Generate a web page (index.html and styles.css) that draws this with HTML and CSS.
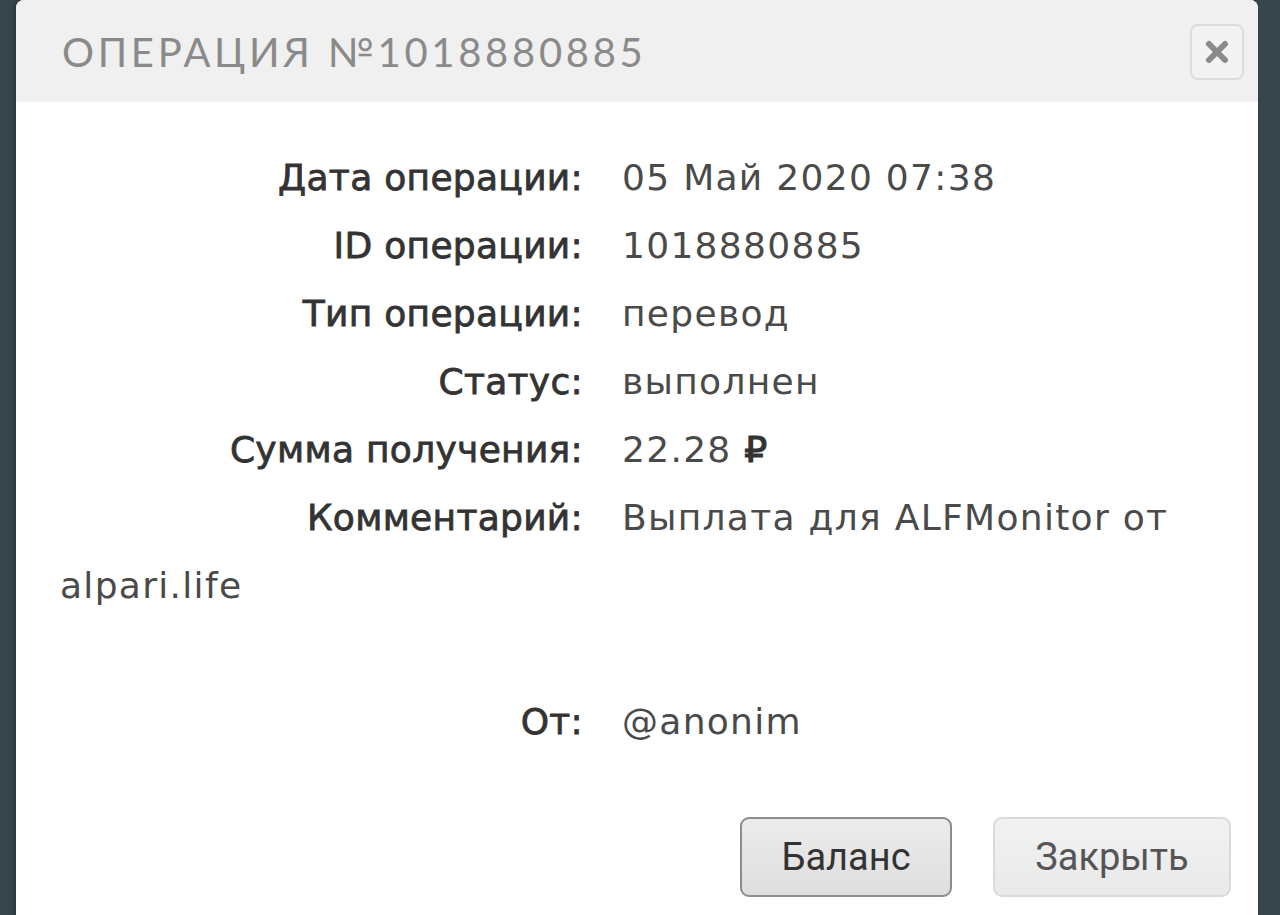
FILE: index.html
```html
<!DOCTYPE html>
<html lang="ru">
<head>
  <meta charset="UTF-8">
  <title>Операция №1018880885</title>
  <meta name="viewport" content="width=device-width, initial-scale=1.0">
  <link rel="stylesheet" href="styles.css">
</head>
<body>
  <div class="modal">
    <div class="modal-header">
      <h3 class="modal-title">Операция №1018880885</h3>
      <button class="close-btn" type="button">
        <svg width="26" height="26" viewBox="0 0 26 26"><path d="M5 5 L21 21 M21 5 L5 21" stroke="#8a8a8a" stroke-width="6" stroke-linecap="round"/></svg>
      </button>
    </div>
    <div class="modal-body">
      <div class="row"><span class="label">Дата операции:</span>05 Май 2020 07:38</div>
      <div class="row"><span class="label">ID операции:</span>1018880885</div>
      <div class="row"><span class="label">Тип операции:</span>перевод</div>
      <div class="row"><span class="label">Статус:</span>выполнен</div>
      <div class="row"><span class="label">Сумма получения:</span>22.28 <b class="rub">&#8381;</b></div>
      <div class="row"><span class="label">Комментарий:</span>Выплата для ALFMonitor от alpari.life</div>
      <div class="row empty"></div>
      <div class="row"><span class="label">От:</span>@anonim</div>
    </div>
    <div class="modal-footer">
      <button class="btn btn-active" type="button">Баланс</button>
      <button class="btn btn-close" type="button">Закрыть</button>
    </div>
  </div>
</body>
</html>
```

FILE: styles.css
```css
body { margin: 0; background: #37454d; height: 915px; overflow: hidden; font-family: "DejaVu Sans", Arial, sans-serif; }
.modal { margin-left: 16px; width: 1242px; height: 940px; background: #fff; border-radius: 8px 8px 0 0; box-shadow: -2px 0 4px rgba(0,0,0,0.25); }
.modal-header { height: 102px; background: #f0f0f0; border-radius: 8px 8px 0 0; display: flex; align-items: center; justify-content: space-between; padding: 0 14px 0 46px; box-sizing: border-box; }
.modal-title { margin: 0; font-family: Lato, sans-serif; font-weight: 400; font-size: 40px; letter-spacing: 3.7px; text-transform: uppercase; color: #8a8a8a; padding-top: 2px; }
.close-btn { width: 54px; height: 56px; margin-top: 2px; border: 2px solid #dcdcdc; border-radius: 8px; background: #f3f3f3; padding: 0; display: flex; align-items: center; justify-content: center; }
.modal-body { padding: 42px 40px 0 44px; color: #4a4a4a; font-size: 36px; line-height: 68px; letter-spacing: 1.3px; }
.row.empty { height: 68px; }
.label { display: inline-block; width: 562px; padding-right: 39px; box-sizing: border-box; text-align: right; color: #333; letter-spacing: 0.3px; -webkit-text-stroke: 0.8px #333; }
.rub { font-weight: 400; color: #333; -webkit-text-stroke: 1.2px #333; }
.modal-footer { display: flex; justify-content: flex-end; gap: 41px; padding: 61px 27px 0 0; }
.btn { height: 80px; padding: 0; border: 2px solid #dadada; border-radius: 9px; background: linear-gradient(#f2f2f2, #e9e9e9); font-family: Roboto, sans-serif; font-size: 38px; color: #555; }
.btn-active { width: 212px; border-color: #8c8c8c; background: linear-gradient(#ececec, #dedede); color: #333; }
.btn-close { width: 238px; }
```
